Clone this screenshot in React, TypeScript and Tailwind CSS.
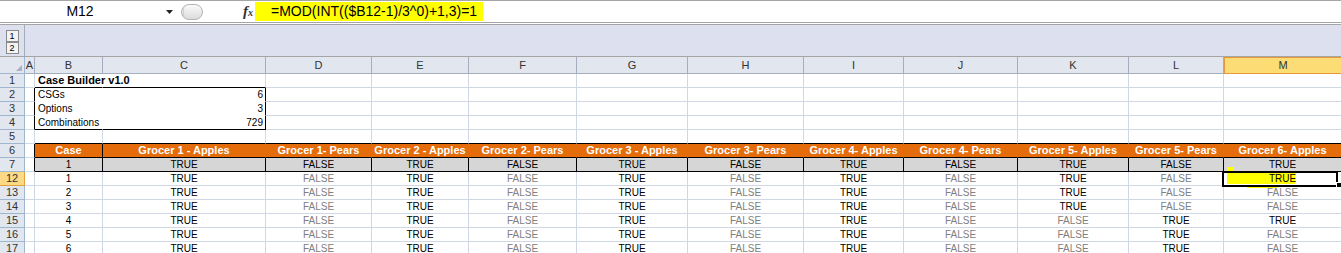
import React from "react";

const GRID =
  "grid grid-cols-[25px_10px_68px_163px_106px_97px_108px_111px_116px_100px_114px_111px_95px_118px]";

const FONT = "font-['Liberation_Sans',Arial,sans-serif]";

const letters = ["A", "B", "C", "D", "E", "F", "G", "H", "I", "J", "K", "L", "M"];

const grocers = [
  "Grocer 1 - Apples",
  "Grocer 1- Pears",
  "Grocer 2 - Apples",
  "Grocer 2- Pears",
  "Grocer 3 - Apples",
  "Grocer 3- Pears",
  "Grocer 4- Apples",
  "Grocer 4- Pears",
  "Grocer 5- Apples",
  "Grocer 5- Pears",
  "Grocer 6- Apples",
];

const T = true;
const F = false;

const first = [T, F, T, F, T, F, T, F, T, F, T];

const cases = [
  { row: 12, n: 1, v: [T, F, T, F, T, F, T, F, T, F, T] },
  { row: 13, n: 2, v: [T, F, T, F, T, F, T, F, T, F, F] },
  { row: 14, n: 3, v: [T, F, T, F, T, F, T, F, T, F, F] },
  { row: 15, n: 4, v: [T, F, T, F, T, F, T, F, F, T, T] },
  { row: 16, n: 5, v: [T, F, T, F, T, F, T, F, F, T, F] },
  { row: 17, n: 6, v: [T, F, T, F, T, F, T, F, F, T, F] },
];

const cell = "h-[14px] border-r border-b border-[#d0d7e5] flex items-center text-[10px] leading-none";

function RowHead({ n, active }: { n: number; active?: boolean }) {
  return (
    <div
      className={
        active
          ? "h-[14px] border-r border-b border-[#e3a23c] bg-[#fbd985] flex items-center justify-center text-[11px] text-[#333]"
          : "h-[14px] border-r border-b border-[#9eb6ce] bg-[#e2e6ee] flex items-center justify-center text-[11px] text-[#333]"
      }
    >
      {n}
    </div>
  );
}

function Bool({ v }: { v: boolean }) {
  return v ? <span className="text-black">TRUE</span> : <span className="text-[#808080]">FALSE</span>;
}

export default function App() {
  return (
    <div className={`w-[1341px] h-[253px] overflow-hidden bg-white ${FONT}`}>
      {/* formula bar */}
      <div className="h-[23px] flex items-center border-t border-b border-[#a5a5a5] bg-white">
        <div className="w-[160px] text-center text-[14px] text-black">M12</div>
        <svg width="7" height="4" viewBox="0 0 7 4" className="ml-[6px]">
          <path d="M0 0h7L3.5 4z" fill="#222" />
        </svg>
        <div className="ml-[8px] w-[22px] h-[16px] rounded-full border border-[#b4b4b4] bg-gradient-to-b from-[#fafafa] to-[#dcdcdc] flex items-center">
          <div className="ml-[1px] w-[8px] h-[12px] rounded-full border-l border-[#cfcfcf]" />
        </div>
        <div className="ml-[40px] w-[12px] flex items-baseline font-['Liberation_Serif',serif] italic font-semibold text-[#333]">
          <span className="text-[15px]">f</span>
          <span className="text-[10px]">x</span>
        </div>
        <div className="h-[19px] w-[228px] bg-[#ffff00] flex items-center pl-[16px] text-[14px] text-black whitespace-nowrap">
          =MOD(INT(($B12-1)/3^0)+1,3)=1
        </div>
      </div>
      <div className="h-[1px] bg-white" />

      {/* outline strip */}
      <div className="h-[33px] flex border-t border-b border-[#a5a5a5] bg-[#dde1ef]">
        <div className="w-[25px] border-r border-[#a5acb8] flex flex-col items-center pt-[5px]">
          <div className="w-[13px] h-[12px] border border-[#8a8a8a] bg-[#f3f3f3] text-[9px] leading-[10px] text-center text-black">
            1
          </div>
          <div className="w-[13px] h-[12px] border border-[#8a8a8a] bg-[#f3f3f3] text-[9px] leading-[10px] text-center text-black">
            2
          </div>
        </div>
      </div>

      {/* column headers */}
      <div className={GRID}>
        <div className="h-[17px] border-r border-b border-[#9eb6ce] bg-[#e2e6ee] flex items-end justify-end pr-[2px] pb-[2px]">
          <svg width="6" height="6" viewBox="0 0 6 6">
            <path d="M6 0v6H0z" fill="#a9b0bb" />
          </svg>
        </div>
        {letters.map((l) =>
          l === "M" ? (
            <div
              key={l}
              className="h-[17px] border border-[#e8973a] bg-[#fcdc74] flex items-center justify-center text-[11px] text-[#333]"
            >
              {l}
            </div>
          ) : (
            <div
              key={l}
              className="h-[17px] border-r border-b border-[#a4aebe] bg-[#e2e6ee] flex items-center justify-center text-[11px] text-[#333]"
            >
              {l}
            </div>
          )
        )}
      </div>

      {/* row 1 */}
      <div className={GRID}>
        <RowHead n={1} />
        <div className={cell} />
        <div className={`${cell} border-r-white border-b-black pl-[3px] font-bold text-[11px] whitespace-nowrap overflow-visible`}>
          Case Builder v1.0
        </div>
        <div className={`${cell} border-b-black`} />
        {Array.from({ length: 10 }).map((_, i) => (
          <div key={i} className={cell} />
        ))}
      </div>

      {/* rows 2-4 */}
      {[
        { n: 2, label: "CSGs", val: "6" },
        { n: 3, label: "Options", val: "3" },
        { n: 4, label: "Combinations", val: "729" },
      ].map((r) => (
        <div key={r.n} className={GRID}>
          <RowHead n={r.n} />
          <div className={`${cell} border-r-black`} />
          <div className={`${cell} border-r-white pl-[3px] ${r.n === 4 ? "border-b-black" : "border-b-white"}`}>{r.label}</div>
          <div className={`${cell} border-r-black justify-end pr-[2px] ${r.n === 4 ? "border-b-black" : "border-b-white"}`}>
            {r.val}
          </div>
          {Array.from({ length: 10 }).map((_, i) => (
            <div key={i} className={cell} />
          ))}
        </div>
      ))}

      {/* row 5 */}
      <div className={GRID}>
        <RowHead n={5} />
        <div className={cell} />
        {Array.from({ length: 12 }).map((_, i) => (
          <div key={i} className={`${cell} border-b-black`} />
        ))}
      </div>

      {/* row 6 header */}
      <div className={GRID}>
        <RowHead n={6} />
        <div className={`${cell} border-r-black`} />
        <div className={`${cell} bg-[#e46c0a] border-r-black border-b-black justify-center text-white font-bold text-[11px]`}>
          Case
        </div>
        {grocers.map((g) => (
          <div
            key={g}
            className={`${cell} bg-[#e46c0a] border-r-[#e46c0a] border-b-black justify-center text-white font-bold text-[11px] whitespace-nowrap`}
          >
            {g}
          </div>
        ))}
      </div>

      {/* row 7 */}
      <div className={GRID}>
        <RowHead n={7} />
        <div className={`${cell} border-r-black`} />
        <div className={`${cell} bg-[#d6d6d6] border-r-black border-b-black justify-center text-black`}>1</div>
        {first.map((v, i) => (
          <div key={i} className={`${cell} bg-[#d6d6d6] border-r-black border-b-black justify-center text-black`}>
            {v ? "TRUE" : "FALSE"}
          </div>
        ))}
      </div>

      {/* case rows */}
      {cases.map((c) => (
        <div key={c.row} className={GRID}>
          <RowHead n={c.row} active={c.row === 12} />
          <div className={cell} />
          <div className={`${cell} justify-center text-black`}>{c.n}</div>
          {c.v.map((v, i) =>
            c.row === 12 && i === 10 ? (
              <div key={i} className={`${cell} relative justify-center`}>
                <div className="absolute left-[3px] top-[1px] w-[68px] h-[11px] bg-[#ffff00]" />
                <div className="absolute left-[3px] -top-[5px] w-[7px] h-[4px] bg-[#ffff00]" />
                <div className="absolute left-[23px] top-[13px] w-[30px] h-[3px] bg-[#ffff00]" />
                <span className="relative text-black">TRUE</span>
                <div className="absolute -left-[2px] -top-[1px] w-[116px] h-[16px] border-2 border-black" />
                <div className="absolute left-[112px] top-[10px] w-[6px] h-[6px] bg-black border border-white" />
              </div>
            ) : (
              <div key={i} className={`${cell} justify-center`}>
                <Bool v={v} />
              </div>
            )
          )}
        </div>
      ))}
    </div>
  );
}
